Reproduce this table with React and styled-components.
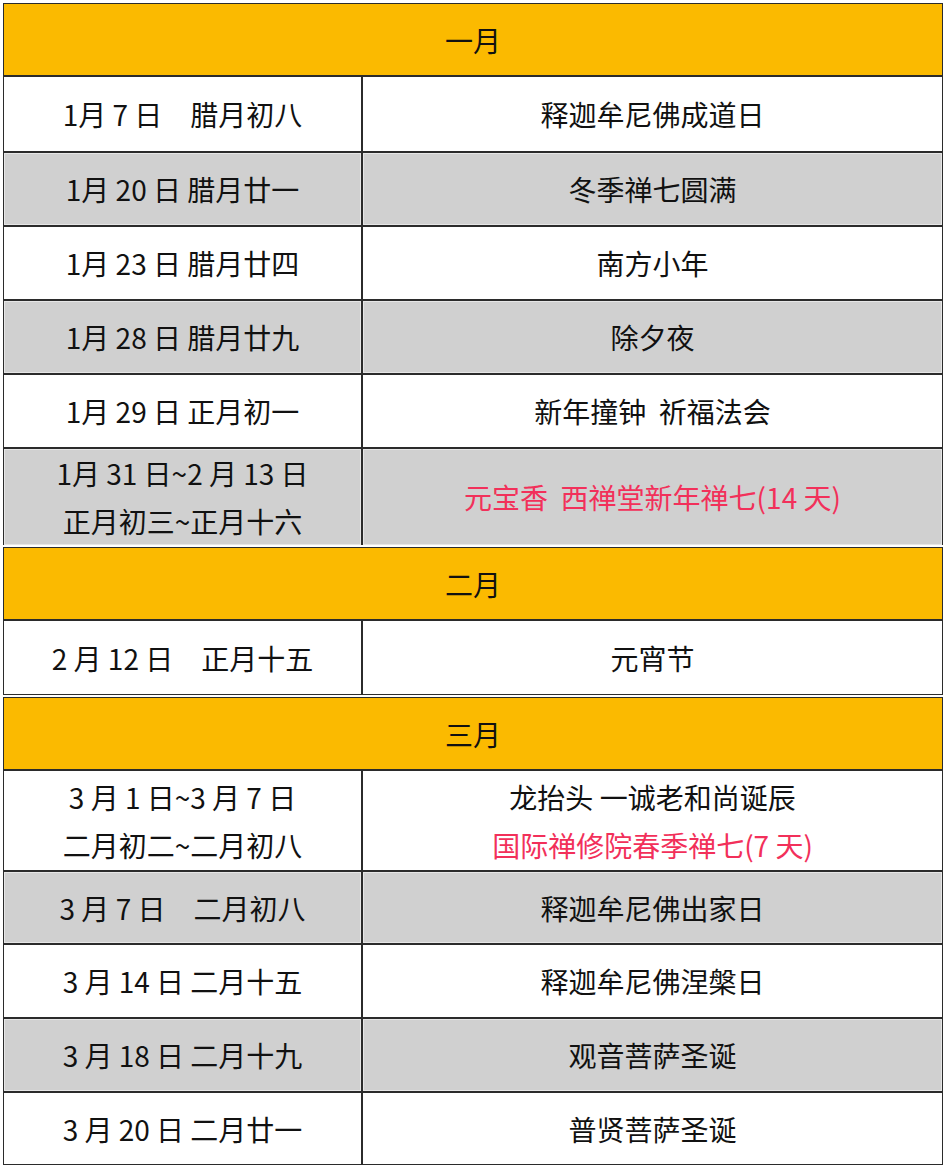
import React from 'react';
import styled, {createGlobalStyle} from 'styled-components';

const GlobalStyle = createGlobalStyle`
    body{
        margin:0;
        background:#fff;
        font-family:"Noto Sans CJK SC", "Noto Sans", sans-serif;
    }
`;

const Page = styled.div`
    width:945px;
    padding:3px 2px 2px 3px;
    box-sizing:border-box;
    display:flex;
    flex-direction:column;
    gap:2px;
`;

const MonthTable = styled.div`
    width:940px;
    display:flex;
    flex-direction:column;
    border:1px solid #2b2b2b;
    box-sizing:border-box;
`;

const Header = styled.div`
    height:73px;
    background:#fbba00;
    border-bottom:2px solid #2b2b2b;
    box-sizing:border-box;
    display:flex;
    align-items:center;
    justify-content:center;
    font-size:28px;
    color:#111;
`;

const Row = styled.div`
    display:grid;
    grid-template-columns:357px 1fr;
    height:${props => props.h}px;
    border-top:${props => props.first ? 'none' : '2px solid #2b2b2b'};
    box-sizing:border-box;
    background:${props => props.shaded ? '#d0d0d0' : '#fff'};
`;

const Cell = styled.div`
    display:flex;
    flex-direction:column;
    align-items:center;
    justify-content:center;
    font-size:28px;
    line-height:48px;
    color:#111;
    white-space:pre;
    box-shadow:${props => props.shaded ? 'inset 0 0 0 1px #e6e6e6' : 'none'};
    & + &{
        border-left:2px solid #2b2b2b;
    }
`;

const Red = styled.span`
    color:#f2305a;
`;

const months = [
    {
        title:'一月',
        rows:[
            {date:['1月 7 日　腊月初八'], event:['释迦牟尼佛成道日']},
            {date:['1月 20 日 腊月廿一'], event:['冬季禅七圆满']},
            {date:['1月 23 日 腊月廿四'], event:['南方小年']},
            {date:['1月 28 日 腊月廿九'], event:['除夕夜']},
            {date:['1月 29 日 正月初一'], event:['新年撞钟  祈福法会']},
            {date:['1月 31 日~2 月 13 日', '正月初三~正月十六'], event:[], red:['元宝香  西禅堂新年禅七(14 天)'], h:97},
        ]
    },
    {
        title:'二月',
        rows:[
            {date:['2 月 12 日　正月十五'], event:['元宵节'], h:73},
        ]
    },
    {
        title:'三月',
        rows:[
            {date:['3 月 1 日~3 月 7 日', '二月初二~二月初八'], event:['龙抬头 一诚老和尚诞辰'], red:['国际禅修院春季禅七(7 天)'], h:99},
            {date:['3 月 7 日　二月初八'], event:['释迦牟尼佛出家日'], h:73},
            {date:['3 月 14 日 二月十五'], event:['释迦牟尼佛涅槃日']},
            {date:['3 月 18 日 二月十九'], event:['观音菩萨圣诞']},
            {date:['3 月 20 日 二月廿一'], event:['普贤菩萨圣诞'], h:73},
        ]
    },
];

const App = () => {
    return (
        <>
            <GlobalStyle/>
            <Page>
                {months.map(month => (
                    <MonthTable key={month.title}>
                        <Header>{month.title}</Header>
                        {month.rows.map((row, i) => {
                            const shaded = i % 2 === 1;
                            return (
                                <Row key={i} first={i === 0} shaded={shaded} h={row.h || 74}>
                                    <Cell shaded={shaded}>
                                        {row.date.map(line => <div key={line}>{line}</div>)}
                                    </Cell>
                                    <Cell shaded={shaded}>
                                        {row.event.map(line => <div key={line}>{line}</div>)}
                                        {row.red && row.red.map(line => <Red key={line}>{line}</Red>)}
                                    </Cell>
                                </Row>
                            );
                        })}
                    </MonthTable>
                ))}
            </Page>
        </>
    );
};

export default App;
